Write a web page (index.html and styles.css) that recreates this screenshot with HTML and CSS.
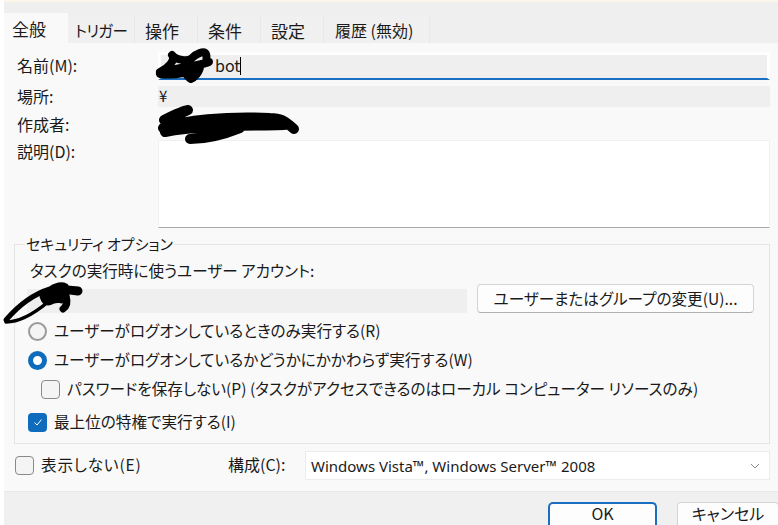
FILE: index.html
```html
<!DOCTYPE html>
<html lang="ja">
<head>
    <meta charset="UTF-8">
    <title>タスクのプロパティ</title>
    <link rel="stylesheet" href="styles.css">
</head>
<body>

    <div class="dialog">
        <div class="tabs">
            <div class="tab active">全般</div>
            <div class="tab trigger">トリガー</div>
            <div class="tab">操作</div>
            <div class="tab">条件</div>
            <div class="tab">設定</div>
            <div class="tab history">履歴 (無効)</div>
        </div>

        <div class="panel">
            <div class="row row-name">
                <label>名前(M):</label>
                <div class="field name-field">bot<span class="caret"></span></div>
            </div>
            <div class="row row-place">
                <label>場所:</label>
                <div class="field">¥</div>
            </div>
            <div class="row row-author">
                <label>作成者:</label>
            </div>
            <div class="row row-desc">
                <label>説明(D):</label>
                <div class="textarea"></div>
            </div>

            <fieldset class="group">
                <legend>セキュリティ オプション</legend>
                <div class="account-label">タスクの実行時に使うユーザー アカウント:</div>
                <div class="account-row">
                    <div class="account-field"></div>
                    <button class="btn change-btn">ユーザーまたはグループの変更(U)...</button>
                </div>
                <div class="option radio-first"><span class="radio"></span>ユーザーがログオンしているときのみ実行する(R)</div>
                <div class="option radio-second"><span class="radio on"></span>ユーザーがログオンしているかどうかにかかわらず実行する(W)</div>
                <div class="option nosave"><span class="check"></span>パスワードを保存しない(P) (タスクがアクセスできるのはローカル コンピューター リソースのみ)</div>
                <div class="option highest">
                    <span class="check on">
                        <svg width="12" height="12" viewBox="0 0 12 12"><path d="M2.5 6.5 L5 9 L9.5 3.5" fill="none" stroke="#fff" stroke-width="1"/></svg>
                    </span>最上位の特権で実行する(I)
                </div>
            </fieldset>

            <div class="bottom-row">
                <div class="option hidden-opt"><span class="check"></span>表示しない(E)</div>
                <label class="config-label">構成(C):</label>
                <div class="select">
                    <span>Windows Vista™, Windows Server™ 2008</span>
                    <svg width="10" height="6" viewBox="0 0 10 6"><path d="M1 1 L5 5 L9 1" fill="none" stroke="#8a8a8a" stroke-width="1"/></svg>
                </div>
            </div>
        </div>

        <div class="footer">
            <button class="btn ok-btn">OK</button>
            <button class="btn cancel-btn">キャンセル</button>
        </div>
    </div>

    <!-- hand drawn scribbles over the names -->
    <svg class="scribbles" width="778" height="525" viewBox="0 0 778 525">
        <g fill="none" stroke="#000" stroke-linecap="round" stroke-linejoin="round">
            <path stroke-width="8" d="M160 72 C168 68 176 60 172 55 C176 60 188 62 192 58 C196 54 204 50 206 54 C208 58 204 62 209 62 C200 66 170 68 160 74 C176 76 192 72 200 66 C200 72 194 78 191 79 C186 76 186 70 176 70"/>
            <path stroke-width="10" d="M164 120 C172 116 182 111 188 110 C180 114 172 118 170 120 M163 128 C185 120 225 116 270 118 C280 118 284 120 294 129 M165 132 C195 126 240 126 284 125 M172 126 C200 132 220 126 250 122 M190 139 C205 139 225 134 240 128"/>
            <path stroke-width="5" d="M6 320 C18 306 34 294 50 289 C56 285 62 284 66 286"/>
            <path stroke-width="3.5" d="M6 322 C20 322 36 312 48 302"/>
            <path stroke-width="9" d="M44 296 C52 289 62 289 78 291"/>
            <path stroke-width="15" d="M48 298 C54 295 60 295 62 296"/>
            <path stroke-width="7" d="M66 296 C68 302 67 306 63 309"/>
        </g>
    </svg>

</body>
</html>
```
FILE: styles.css
```css
* {
    box-sizing: border-box;
}

html, body {
    margin: 0;
    height: 100%;
    background: #fff;
    overflow: hidden;
}

body {
    font-family: "Noto Sans CJK JP", "Noto Sans", sans-serif;
    font-size: 15.6px;
    color: #1a1a1a;
    font-feature-settings: "palt";
}

.dialog {
    margin-left: 4px;
    height: 525px;
    display: flex;
    flex-direction: column;
    border-top: 2px solid #fbf5ea;
}

/* Tabs */
.tabs {
    flex: none;
    display: flex;
    align-items: flex-end;
    height: 41px;
    background: #efefef;
}

.tab {
    width: 63px;
    height: 27px;
    line-height: 29px;
    padding-left: 10px;
    font-size: 17px;
    white-space: nowrap;
    border-right: 1px solid #e8e8e8;
    background: #f0f0f0;
}

.tab.active {
    width: 64px;
    height: 30px;
    line-height: 32px;
    padding-left: 8px;
    background: #f9f9f9;
    border-right: none;
}

.tab.trigger {
    width: 67px;
    padding-left: 7px;
    font-size: 15.5px;
    letter-spacing: -0.6px;
}

.tab.history {
    width: 106px;
    padding-left: 11px;
    font-size: 16px;
}

.panel {
    flex: none;
    height: 448px;
    background: #f9f9f9;
    padding: 9px 8px 0 10px;
}

/* Top rows */
.row {
    display: flex;
}

.row label {
    width: 144px;
    padding-left: 3px;
    font-size: 16px;
}

.row-name { height: 28px; }
.row-name label { padding-top: 1px; }

.field {
    flex: 1;
    background: #efefef;
    font-size: 15px;
    line-height: 20px;
    padding-left: 1px;
}

.name-field {
    height: 28px;
    padding-left: 54px;
    border: 3px solid #fff;
    border-bottom: 2px solid #1a6fc0;
    font-size: 16px;
    line-height: 20px;
}

.caret {
    display: inline-block;
    width: 1px;
    height: 18px;
    vertical-align: -3px;
    background: #000;
}

.row-place {
    margin-top: 6px;
    height: 21px;
}

.row-place label { line-height: 21px; }

.row-author {
    height: 33px;
}

.row-author label { padding-top: 5px; }

.row-desc {
    height: 88px;
}

.row-desc label { margin-top: -1px; }

.textarea {
    flex: 1;
    background: #fff;
    border: 1px solid #f0f0f0;
    border-bottom: 1px solid #a8a8a8;
}

/* Security group */
.group {
    margin: 6px 0 0 0;
    padding: 0 14px 0 12px;
    height: 210px;
    border: 1px solid #e5e5e5;
}

.group legend {
    padding: 0 1px;
    margin-left: -2px;
    line-height: 20px;
    font-size: 15px;
}

.account-label {
    margin-top: 6px;
    padding-left: 3px;
    line-height: 20px;
}

.account-row {
    display: flex;
    align-items: flex-end;
    margin-top: 4px;
}

.account-field {
    width: 440px;
    height: 24px;
    background: #efefef;
}

.btn {
    font: inherit;
    color: inherit;
    background: #fdfdfd;
    border: 1px solid #d4d4d4;
    border-bottom-color: #b0b0b0;
    border-radius: 4px;
}

.change-btn {
    width: 277px;
    height: 29px;
    margin-left: 10px;
    padding: 0 0 2px;
}

.option {
    display: flex;
    align-items: center;
    height: 20px;
    padding-left: 1px;
    white-space: nowrap;
}

.radio-first { margin-top: 7px; }
.radio-second { margin-top: 9px; }
.nosave { margin-top: 9px; margin-left: 13px; }
.highest { margin-top: 13px; }

.radio {
    flex: none;
    width: 19px;
    height: 19px;
    margin: 2px 7px 0 0;
    border: 2px solid #9a9a9a;
    border-radius: 50%;
    background: #f4f4f4;
}

.radio.on {
    border: 5.5px solid #0f6cbd;
    background: #fff;
}

.check {
    flex: none;
    display: flex;
    align-items: center;
    justify-content: center;
    width: 19px;
    height: 19px;
    margin: 2px 7px 0 0;
    border: 1.5px solid #8a8a8a;
    border-radius: 4px;
    background: #f4f4f4;
}

.check.on {
    border: none;
    background: #0f6cbd;
}

/* Bottom row */
.bottom-row {
    display: flex;
    align-items: center;
    margin-top: 7px;
    height: 29px;
}

.hidden-opt {
    width: 214px;
    margin-top: -4px;
    letter-spacing: 0.8px;
}

.hidden-opt .check {
    margin-top: 4px;
}

.config-label {
    width: 77px;
    margin-top: -4px;
    font-size: 16px;
}

.select {
    flex: 1;
    height: 29px;
    padding: 0 9px 0 5px;
    display: flex;
    align-items: center;
    justify-content: space-between;
    background: #fff;
    border: 1px solid #ececec;
    font-family: "Noto Sans", sans-serif;
    font-size: 15px;
}

/* Footer, the buttons run off the bottom of the shot */
.footer {
    flex: 1;
    min-height: 0;
    display: flex;
    align-items: flex-start;
    padding: 10px 0 0 544px;
    background: #f0f0f0;
    border-top: 1px solid #e8e8e8;
}

.footer .btn {
    flex: none;
    height: 23px;
    padding: 0 0 3px;
    font-size: 16px;
    line-height: 18px;
    border-bottom: none;
    border-radius: 4px 4px 0 0;
}

.ok-btn {
    width: 109px;
}

.footer .ok-btn {
    border: 2px solid #1a6fc0;
    border-bottom: none;
    border-radius: 5px 5px 0 0;
}

.cancel-btn {
    width: 102px;
    margin-left: 20px;
}

.scribbles {
    position: absolute;
    left: 0;
    top: 0;
    pointer-events: none;
}
```
